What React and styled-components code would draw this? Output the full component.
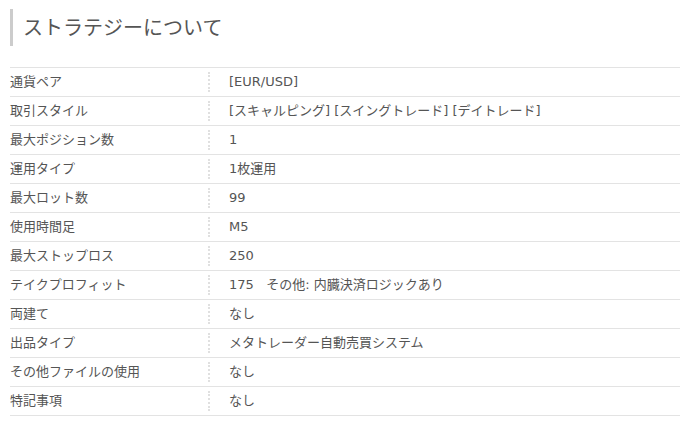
import React from "react";
import styled, { createGlobalStyle } from "styled-components";

const Global = createGlobalStyle`
  html, body { margin: 0; padding: 0; background: #fff; }
  body { font-family: "DejaVu Sans", "Noto Sans CJK JP", sans-serif; color: #555; }
`;

const Page = styled.div`
  padding: 9px 19px 0 10px;
`;

const Heading = styled.h2`
  margin: 0 0 21px 0;
  height: 37px;
  line-height: 35px;
  border-left: 3px solid #cccccc;
  padding-left: 10px;
  font-family: "Noto Sans CJK JP", sans-serif;
  font-size: 20px;
  font-weight: 400;
  color: #555;
`;

const Table = styled.div`
  border-bottom: 1px solid #e3e3e3;
`;

const Row = styled.div`
  display: grid;
  grid-template-columns: 200px 1fr;
  border-top: 1px solid #e3e3e3;
  height: 28px;
  align-items: center;
`;

const Label = styled.div`
  font-size: 13px;
  line-height: 20px;
  height: 20px;
  color: #555;
  border-right: 2px dotted #e0e0e0;
  white-space: nowrap;
`;

const Value = styled.div`
  font-size: 13px;
  line-height: 20px;
  padding-left: 19px;
  color: #555;
  white-space: nowrap;
`;

const rows = [
  ["通貨ペア", "[EUR/USD]"],
  ["取引スタイル", "[スキャルピング] [スイングトレード] [デイトレード]"],
  ["最大ポジション数", "1"],
  ["運用タイプ", "1枚運用"],
  ["最大ロット数", "99"],
  ["使用時間足", "M5"],
  ["最大ストップロス", "250"],
  ["テイクプロフィット", "175\u00a0\u00a0 その他: 内臓決済ロジックあり"],
  ["両建て", "なし"],
  ["出品タイプ", "メタトレーダー自動売買システム"],
  ["その他ファイルの使用", "なし"],
  ["特記事項", "なし"],
];

export default function App() {
  return (
    <Page>
      <Global />
      <Heading>ストラテジーについて</Heading>
      <Table>
        {rows.map(([k, v]) => (
          <Row key={k}>
            <Label>{k}</Label>
            <Value>{v}</Value>
          </Row>
        ))}
      </Table>
    </Page>
  );
}
